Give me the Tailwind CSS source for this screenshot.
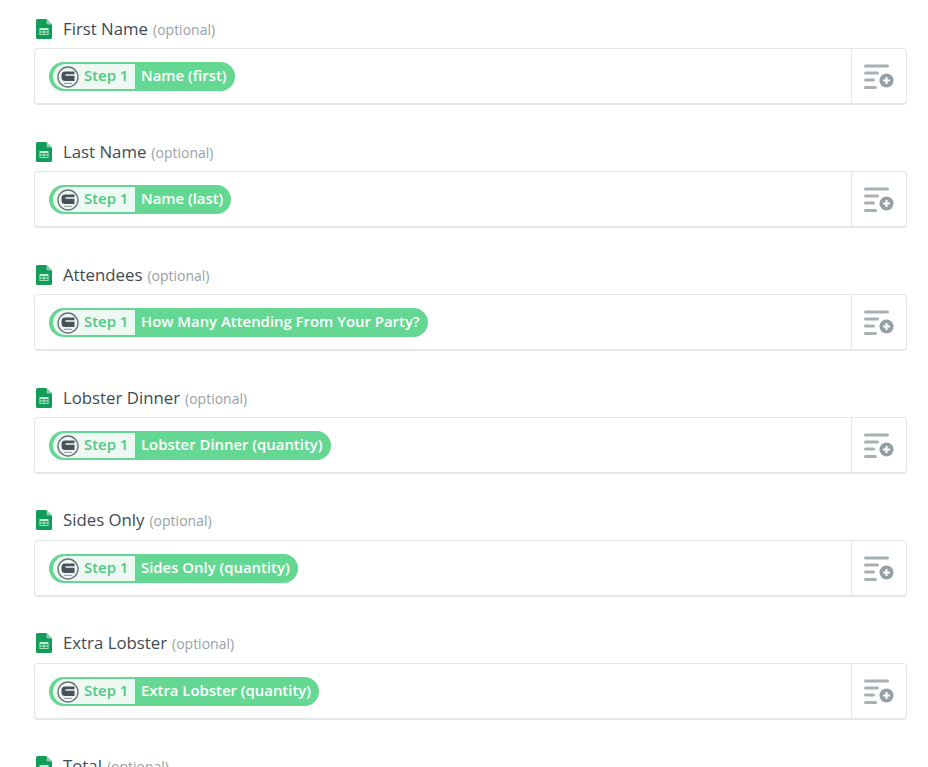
<!DOCTYPE html>
<html>
<head>
<meta charset="utf-8">
<script src="https://cdn.jsdelivr.net/npm/@tailwindcss/browser@4"></script>
</head>
<body class="bg-white h-[767px] overflow-hidden font-['Open_Sans',sans-serif]">
<!-- shared icons -->
<svg class="hidden">
  <symbol id="sheet" viewBox="0 0 16 20">
    <path d="M1.500 0H10.500L16 5.500V18.500A1.500 1.500 0 0 1 14.500 20H1.500A1.500 1.500 0 0 1 0 18.500V1.500A1.500 1.500 0 0 1 1.500 0Z" fill="#0f9d58"/>
    <path d="M10.500 0L16 5.500H12A1.500 1.500 0 0 1 10.500 4Z" fill="#87ceac"/>
    <path d="M3.500 9H12.500V16H3.500ZM4.300 11V12.600H7.600V11ZM8.400 11V12.600H11.700V11ZM4.300 13.400V15.200H7.600V13.400ZM8.400 13.400V15.200H11.700V13.400Z" fill="#c9ead8" fill-rule="evenodd"/>
  </symbol>
  <symbol id="app" viewBox="0 0 22 22">
    <circle cx="11" cy="11" r="10" fill="#f4f6f6" stroke="#66747a" stroke-width="1.400"/>
    <path d="M17.500 5.500H8A3.500 3.500 0 0 0 4.500 9V11.500A3.500 3.500 0 0 0 8 15H17.500V9.800H8.500V8.300H17.500Z" fill="#47535a"/>
    <path d="M7 17.300H15" stroke="#8a9499" stroke-width="1"/>
  </symbol>
  <symbol id="add" viewBox="0 0 30 26">
    <rect x="0" y="1.500" width="25" height="3" rx="1.500" fill="#a9b0b4"/>
    <rect x="0" y="8.500" width="15" height="3" rx="1.500" fill="#a9b0b4"/>
    <rect x="0" y="15.500" width="11" height="3" rx="1.500" fill="#a9b0b4"/>
    <rect x="0" y="23" width="13" height="3" rx="1.500" fill="#a9b0b4"/>
    <circle cx="22.500" cy="17.500" r="7" fill="#959ea3"/>
    <path d="M22.500 14V21M19 17.500H26" stroke="#fff" stroke-width="2"/>
  </symbol>
</svg>

<div class="pl-[34px] pr-[21px] pt-[19px] flex flex-col gap-[14px]">

  <div class="h-[109px]">
    <div class="flex items-center h-[20px] pl-[2px] mb-[9px]">
      <svg class="w-[16px] h-[20px]"><use href="#sheet"/></svg>
      <span class="ml-[11px] text-[16.800px] font-medium text-[#3e4b53]">First Name</span>
      <span class="ml-[5px] text-[14px] font-medium text-[#98a1a6]">(optional)</span>
    </div>
    <div class="flex h-[57px] bg-white border border-[#e2e6e8] border-b-2 rounded-[4px]">
      <div class="flex-1 pl-[14px] pt-[13px]">
        <div class="inline-flex items-center h-[29px] rounded-full bg-[#64d893] text-white text-[14.900px] font-semibold pl-[4px] pr-[8px]">
          <div class="flex items-center h-[25px] w-[82px] pl-[4px] bg-[#eff9f3] rounded-l-full text-[#4cc981]">
            <svg class="w-[22px] h-[22px] mr-[5px]"><use href="#app"/></svg><span class="pb-[2px]">Step 1</span>
          </div>
          <span class="ml-[6px] pb-[2px]">Name (first)</span>
        </div>
      </div>
      <div class="w-[55px] border-l border-[#e2e6e8] flex items-center justify-center">
        <svg class="w-[30px] h-[26px] mb-[1px]"><use href="#add"/></svg>
      </div>
    </div>
  </div>

  <div class="h-[109px]">
    <div class="flex items-center h-[20px] pl-[2px] mb-[9px]">
      <svg class="w-[16px] h-[20px]"><use href="#sheet"/></svg>
      <span class="ml-[11px] text-[16.800px] font-medium text-[#3e4b53]">Last Name</span>
      <span class="ml-[5px] text-[14px] font-medium text-[#98a1a6]">(optional)</span>
    </div>
    <div class="flex h-[57px] bg-white border border-[#e2e6e8] border-b-2 rounded-[4px]">
      <div class="flex-1 pl-[14px] pt-[13px]">
        <div class="inline-flex items-center h-[29px] rounded-full bg-[#64d893] text-white text-[14.900px] font-semibold pl-[4px] pr-[8px]">
          <div class="flex items-center h-[25px] w-[82px] pl-[4px] bg-[#eff9f3] rounded-l-full text-[#4cc981]">
            <svg class="w-[22px] h-[22px] mr-[5px]"><use href="#app"/></svg><span class="pb-[2px]">Step 1</span>
          </div>
          <span class="ml-[6px] pb-[2px]">Name (last)</span>
        </div>
      </div>
      <div class="w-[55px] border-l border-[#e2e6e8] flex items-center justify-center">
        <svg class="w-[30px] h-[26px] mb-[1px]"><use href="#add"/></svg>
      </div>
    </div>
  </div>

  <div class="h-[109px]">
    <div class="flex items-center h-[20px] pl-[2px] mb-[9px]">
      <svg class="w-[16px] h-[20px]"><use href="#sheet"/></svg>
      <span class="ml-[11px] text-[16.800px] font-medium text-[#3e4b53]">Attendees</span>
      <span class="ml-[5px] text-[14px] font-medium text-[#98a1a6]">(optional)</span>
    </div>
    <div class="flex h-[57px] bg-white border border-[#e2e6e8] border-b-2 rounded-[4px]">
      <div class="flex-1 pl-[14px] pt-[13px]">
        <div class="inline-flex items-center h-[29px] rounded-full bg-[#64d893] text-white text-[14.900px] font-semibold pl-[4px] pr-[8px]">
          <div class="flex items-center h-[25px] w-[82px] pl-[4px] bg-[#eff9f3] rounded-l-full text-[#4cc981]">
            <svg class="w-[22px] h-[22px] mr-[5px]"><use href="#app"/></svg><span class="pb-[2px]">Step 1</span>
          </div>
          <span class="ml-[6px] pb-[2px]">How Many Attending From Your Party?</span>
        </div>
      </div>
      <div class="w-[55px] border-l border-[#e2e6e8] flex items-center justify-center">
        <svg class="w-[30px] h-[26px] mb-[1px]"><use href="#add"/></svg>
      </div>
    </div>
  </div>

  <div class="h-[109px]">
    <div class="flex items-center h-[20px] pl-[2px] mb-[9px]">
      <svg class="w-[16px] h-[20px]"><use href="#sheet"/></svg>
      <span class="ml-[11px] text-[16.800px] font-medium text-[#3e4b53]">Lobster Dinner</span>
      <span class="ml-[5px] text-[14px] font-medium text-[#98a1a6]">(optional)</span>
    </div>
    <div class="flex h-[57px] bg-white border border-[#e2e6e8] border-b-2 rounded-[4px]">
      <div class="flex-1 pl-[14px] pt-[13px]">
        <div class="inline-flex items-center h-[29px] rounded-full bg-[#64d893] text-white text-[14.900px] font-semibold pl-[4px] pr-[8px]">
          <div class="flex items-center h-[25px] w-[82px] pl-[4px] bg-[#eff9f3] rounded-l-full text-[#4cc981]">
            <svg class="w-[22px] h-[22px] mr-[5px]"><use href="#app"/></svg><span class="pb-[2px]">Step 1</span>
          </div>
          <span class="ml-[6px] pb-[2px]">Lobster Dinner (quantity)</span>
        </div>
      </div>
      <div class="w-[55px] border-l border-[#e2e6e8] flex items-center justify-center">
        <svg class="w-[30px] h-[26px] mb-[1px]"><use href="#add"/></svg>
      </div>
    </div>
  </div>

  <div class="h-[109px]">
    <div class="flex items-center h-[20px] pl-[2px] -mt-px mb-[10px]">
      <svg class="w-[16px] h-[20px]"><use href="#sheet"/></svg>
      <span class="ml-[11px] text-[16.800px] font-medium text-[#3e4b53]">Sides Only</span>
      <span class="ml-[5px] text-[14px] font-medium text-[#98a1a6]">(optional)</span>
    </div>
    <div class="flex h-[57px] bg-white border border-[#e2e6e8] border-b-2 rounded-[4px]">
      <div class="flex-1 pl-[14px] pt-[13px]">
        <div class="inline-flex items-center h-[29px] rounded-full bg-[#64d893] text-white text-[14.900px] font-semibold pl-[4px] pr-[8px]">
          <div class="flex items-center h-[25px] w-[82px] pl-[4px] bg-[#eff9f3] rounded-l-full text-[#4cc981]">
            <svg class="w-[22px] h-[22px] mr-[5px]"><use href="#app"/></svg><span class="pb-[2px]">Step 1</span>
          </div>
          <span class="ml-[6px] pb-[2px]">Sides Only (quantity)</span>
        </div>
      </div>
      <div class="w-[55px] border-l border-[#e2e6e8] flex items-center justify-center">
        <svg class="w-[30px] h-[26px] mb-[1px]"><use href="#add"/></svg>
      </div>
    </div>
  </div>

  <div class="h-[109px]">
    <div class="flex items-center h-[20px] pl-[2px] -mt-px mb-[10px]">
      <svg class="w-[16px] h-[20px]"><use href="#sheet"/></svg>
      <span class="ml-[11px] text-[16.800px] font-medium text-[#3e4b53]">Extra Lobster</span>
      <span class="ml-[5px] text-[14px] font-medium text-[#98a1a6]">(optional)</span>
    </div>
    <div class="flex h-[57px] bg-white border border-[#e2e6e8] border-b-2 rounded-[4px]">
      <div class="flex-1 pl-[14px] pt-[13px]">
        <div class="inline-flex items-center h-[29px] rounded-full bg-[#64d893] text-white text-[14.900px] font-semibold pl-[4px] pr-[8px]">
          <div class="flex items-center h-[25px] w-[82px] pl-[4px] bg-[#eff9f3] rounded-l-full text-[#4cc981]">
            <svg class="w-[22px] h-[22px] mr-[5px]"><use href="#app"/></svg><span class="pb-[2px]">Step 1</span>
          </div>
          <span class="ml-[6px] pb-[2px]">Extra Lobster (quantity)</span>
        </div>
      </div>
      <div class="w-[55px] border-l border-[#e2e6e8] flex items-center justify-center">
        <svg class="w-[30px] h-[26px] mb-[1px]"><use href="#add"/></svg>
      </div>
    </div>
  </div>

  <div class="h-[109px]">
    <div class="flex items-center h-[20px] pl-[2px] -mt-px mb-[10px]">
      <svg class="w-[16px] h-[20px]"><use href="#sheet"/></svg>
      <span class="ml-[11px] text-[16.800px] font-medium text-[#3e4b53]">Total</span>
      <span class="ml-[5px] text-[14px] font-medium text-[#98a1a6]">(optional)</span>
    </div>
  </div>

</div>
</body>
</html>
